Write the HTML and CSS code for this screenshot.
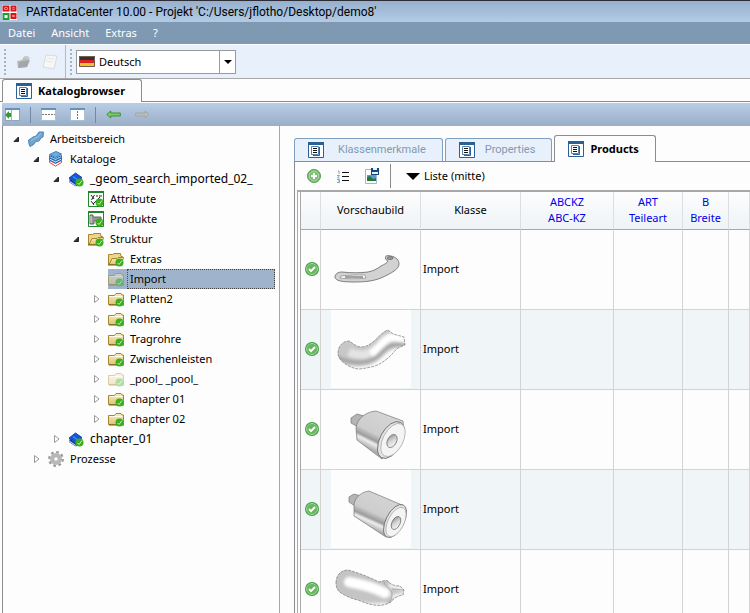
FILE: index.html
```
<!DOCTYPE html>
<html lang="de">
<head>
  <meta charset="UTF-8">
  <meta name="viewport" content="width=device-width, initial-scale=1">
  <title>PARTdataCenter 10.00</title>
  <link rel="stylesheet" href="styles.css">
</head>
<body>

  <!-- shared icons -->
  <svg class="sprite" aria-hidden="true">
    <defs>
      <linearGradient id="gFolder" x1="0" y1="0" x2="0" y2="1"><stop offset="0" stop-color="#f7ecc0"/><stop offset="1" stop-color="#dcc67c"/></linearGradient>
      <linearGradient id="gSteel" x1="0" y1="0" x2="1" y2="1"><stop offset="0" stop-color="#888"/><stop offset=".5" stop-color="#d8d8d8"/><stop offset="1" stop-color="#fff"/></linearGradient>
      <linearGradient id="gBody" x1=".7" y1="0" x2=".2" y2="1"><stop offset="0" stop-color="#d6d6d6"/><stop offset=".5" stop-color="#cdcdcd"/><stop offset=".62" stop-color="#9c9c9c"/><stop offset=".68" stop-color="#eee"/><stop offset=".8" stop-color="#aaa"/><stop offset="1" stop-color="#ddd"/></linearGradient>
      <filter id="soft" x="-10%" y="-10%" width="120%" height="120%"><feGaussianBlur stdDeviation="1.500"/></filter>
      <clipPath id="cTube"><path d="M7 43c0-7 5-12 11-12 4 2 7 6 12 6 5 0 8-2 12-5 5-4 9-10 15-12l5 4 11 3 1 8-7 3c-4 3-6 7-10 10-6 5-11 8-17 9-5 1-9 2-13 2-6-1-10-3-14-6-4-3-6-6-6-10z"/></clipPath>
      <clipPath id="cGrip"><path d="M5 33c0-8 5-13 12-13 11 3 21 7 31 12 4-1 6-2 9-1 3 4 7 5 12 5l4 4-1 5c-6 1-9 3-12 7-5 3-11 4-17 3-6-1-11-3-16-5-6-1-12-4-17-7-3-2-5-5-5-10z"/></clipPath>
    </defs>
    <symbol id="tick" viewBox="0 0 16 16">
      <circle cx="11.500" cy="11.500" r="4" fill="#3cae1c"/>
      <path d="M9.500 12l1.500 1.500 3-4" fill="none" stroke="#c4f0b4"/>
    </symbol>
    <symbol id="folder" viewBox="0 0 16 16">
      <path d="M.5 13.500V4.500h6l1.500-2h5l1 1.500h1.500v9.500z" fill="url(#gFolder)" stroke="#a8862c"/>
      <path d="M1.500 5.500h13" stroke="#fffbe0"/>
      <path d="M1 14h15" stroke="#7c5c14"/>
      <use href="#tick"/>
    </symbol>
    <symbol id="folder-open" viewBox="0 0 16 16">
      <path d="M.5 13.500v-10h4l1.500-1h6.500l.5 3h1.500v8z" fill="#ecd68c" stroke="#a8862c"/>
      <path d="M1 13.500l3-6h5l1-1h5.500l-2 7z" fill="url(#gFolder)" stroke="#a8862c"/>
      <path d="M0 14h14" stroke="#7c5c14"/>
      <use href="#tick"/>
    </symbol>
    <symbol id="book" viewBox="0 0 16 16">
      <path d="M1 7l6.500-5 6.500 4.500-5.500 5z" fill="#1258d8" stroke="#06339a" stroke-width=".8"/>
      <path d="M1.500 7.500v4l6.500 4 6-5.500V7l-5.500 5z" fill="#0b3aa8"/>
      <path d="M2 10l6 4V15l-6-3.500z" fill="#b8d4f4"/>
      <path d="M5 5.500l4 3" stroke="#3f8cf4" stroke-width="1.500"/>
      <use href="#tick"/>
    </symbol>
    <symbol id="stack" viewBox="0 0 16 16">
      <path d="M1.500 11.500l6 3.500 6-3.500v-2l-6 3-6-3z" fill="#fff" stroke="#e04848"/>
      <path d="M1.500 9l6 3 6-3V7l-6 3-6-3z" fill="#c8e4f8" stroke="#2c6cac"/>
      <path d="M1.500 6.500l6 3 6-3v-2l-6 3-6-3z" fill="#9fd0f0" stroke="#2c6cac"/>
      <path d="M1.500 3.500L8 .5l5.500 2.500-6 3.500z" fill="#69aee2" stroke="#3c7cb8"/>
    </symbol>
    <symbol id="workspace" viewBox="0 0 16 16">
      <path d="M1 13l-.5-4L3 7.500 5 6l3-1 3-4h4.500l-.5 5-2 1-2 3-3 .5L5 14l-3 1.500z" fill="#70a3d0" stroke="#5086b8"/>
      <path d="M3 10l4-3 3-1 3-4" fill="none" stroke="#9cc4e4"/>
    </symbol>
    <symbol id="attributes" viewBox="0 0 16 16">
      <path d="M.5 1h15v14.500H.5z" fill="#fff" stroke="#1f852b"/><path d="M0 1h16" stroke="#1f852b" stroke-width="2"/>
      <path d="M3 4l3 4M6.500 4l-3 5M8 5h2M11 5h3M5 13l7-7M3 10l3 4" fill="none" stroke="#222"/>
      <use href="#tick"/>
    </symbol>
    <symbol id="product" viewBox="0 0 16 16">
      <path d="M.5 1h15v14.500H.5z" fill="#fff" stroke="#1f852b"/><path d="M0 1h16" stroke="#1f852b" stroke-width="2"/>
      <path d="M2 4h3v2h8v4H6v3H2z" fill="#969696" stroke="#666"/><path d="M3 5v7" stroke="#ddd"/>
      <use href="#tick"/>
    </symbol>
    <symbol id="gear" viewBox="0 0 16 16">
      <circle cx="8" cy="8" r="6.800" fill="none" stroke="#999" stroke-width="2.200" stroke-dasharray="2.670 2.670"/>
      <circle cx="8" cy="8" r="4.300" fill="#fff" stroke="#b8b8b8" stroke-width="3.500"/>
      <circle cx="8" cy="8" r="2.300" fill="#fff" stroke="#888" stroke-width=".7"/>
    </symbol>
    <symbol id="open" viewBox="0 0 10 10"><path d="M7.500 3v4.500H3z" fill="#333" stroke="#222"/></symbol>
    <symbol id="closed" viewBox="0 0 10 10"><path d="M3.500 1.500v7L8 5z" fill="#fff" stroke="#999"/></symbol>
    <symbol id="doc" viewBox="0 0 16 16">
      <path d="M.5.5h15v15H.5z" fill="#fff" stroke="#2c5f97"/><path d="M0 1.500h16" stroke="#2c5f97" stroke-width="3"/>
      <path d="M3.500 4.500h7v8h-7z" fill="#fff" stroke="#5a83b0"/><path d="M11.500 5v8.500H5" fill="none" stroke="#2c5f97"/>
      <path d="M5 6.500h4M5 8.500h4M5 10.500h4" stroke="#111"/>
    </symbol>
    <symbol id="ok" viewBox="0 0 14 14">
      <circle cx="7" cy="7" r="7" fill="#3c9a3c"/><circle cx="7" cy="7" r="5.500" fill="#64b85c" stroke="#a4d89c"/>
      <path d="M4 7l2 2.200 4-4.200" fill="none" stroke="#fff" stroke-width="1.900"/>
    </symbol>
  </svg>

  <header class="titlebar">
    <svg width="16" height="16" viewBox="0 0 16 16">
      <path d="M0 1h15v15H0z" fill="#fff"/>
      <g fill="#fff" stroke="#d81818" stroke-width="2"><path d="M1.500 2.500h5v4h-5zM9.500 2.500h4v4h-4zM9.500 10h4v4h-4z"/></g>
      <path d="M1.500 10h5v5h-5z" fill="#fff" stroke="#1e9e34" stroke-width="2"/>
      <path d="M3 4.500h2M10.500 4.500h2M10.500 12h2" stroke="#d81818"/>
    </svg>
    <span>PARTdataCenter 10.00 - Projekt 'C:/Users/jflotho/Desktop/demo8'</span>
  </header>

  <nav class="menubar">
    <button>Datei</button>
    <button>Ansicht</button>
    <button>Extras</button>
    <button>?</button>
  </nav>

  <div class="toolbar">
    <div class="tool-group">
      <i class="grip"></i>
      <button aria-label="Öffnen"><svg width="16" height="16" viewBox="0 0 16 16"><path d="M1 7l5-1 1-2 5-1 1 3-2 7-9 1z" fill="#bbb"/><path d="M3 8l11-2-3 7-9 1z" fill="#a3a6aa"/><path d="M7 4c2-3 5-3 7 1l-3 0" fill="#c8c8c8"/></svg></button>
      <button aria-label="Neu"><svg width="16" height="16" viewBox="0 0 16 16"><path d="M4 1l11 1-3 13-11-2z" fill="#f7f7f5" stroke="#d8dce0"/><path d="M5 4l7 1M4 7l7 1" stroke="#e4e8e8"/></svg></button>
    </div>
    <div class="tool-group">
      <i class="grip"></i>
      <div class="combo">
        <svg width="16" height="11" viewBox="0 0 16 11"><path d="M0 0h16v4H0z" fill="#333"/><path d="M0 4h16v3H0z" fill="#dc2222"/><path d="M0 7h16v4H0z" fill="#f2c22c"/><path d="M.5.5h15v10H.5z" fill="none" stroke="#735c50"/></svg>
        <select aria-label="Sprache"><option>Deutsch</option><option>English</option></select>
        <span class="combo-arrow"><svg width="8" height="4" viewBox="0 0 8 4"><path d="M0 0h8L4 4z"/></svg></span>
      </div>
    </div>
  </div>

  <div class="tabs main-tabs">
    <button class="tab active"><svg width="16" height="16"><use href="#doc"/></svg>Katalogbrowser</button>
  </div>

  <div class="strip">
    <button aria-label="Baum"><svg width="15" height="13" viewBox="0 0 15 13"><path d="M.5.5h14v12H.5z" fill="#fff" stroke="#8aa6c2"/><path d="M0 1h15" stroke="#6791bd" stroke-width="2"/><path d="M6.500 2v11" stroke="#aac"/><path d="M0 7l4-4v2h2v4H4v2z" fill="#3b9636"/></svg></button>
    <i class="sep"></i>
    <button aria-label="Horizontal teilen"><svg width="15" height="13" viewBox="0 0 15 13"><path d="M.5.5h14v12H.5z" fill="#fff" stroke="#a9c0d8"/><path d="M0 1h15" stroke="#6791bd" stroke-width="2"/><path d="M1 6.500h13" stroke="#777" stroke-dasharray="2 1"/></svg></button>
    <button aria-label="Vertikal teilen"><svg width="15" height="13" viewBox="0 0 15 13"><path d="M.5.5h14v12H.5z" fill="#fff" stroke="#a9c0d8"/><path d="M0 1h15" stroke="#6791bd" stroke-width="2"/><path d="M7.500 3v9" stroke="#777" stroke-dasharray="2 1"/></svg></button>
    <i class="sep"></i>
    <button aria-label="Zurück"><svg width="15" height="9" viewBox="0 0 15 9"><path d="M.8 4.500l4-3.500v2h9.500v3H4.800v2z" fill="#7ccc60" stroke="#37913a"/></svg></button>
    <button aria-label="Vor"><svg width="15" height="9" viewBox="0 0 15 9"><path d="M14.200 4.500l-4-3.500v2H.7v3h9.500v2z" fill="#bbb" stroke="#a0a4a8"/></svg></button>
  </div>

  <main class="content">
    <aside class="tree">
      <ul>
        <li>
          <div class="node"><button class="toggle" aria-label="Zuklappen"><svg width="10" height="10"><use href="#open"/></svg></button><svg width="16" height="16"><use href="#workspace"/></svg><span>Arbeitsbereich</span></div>
          <ul>
            <li>
              <div class="node"><button class="toggle" aria-label="Zuklappen"><svg width="10" height="10"><use href="#open"/></svg></button><svg width="16" height="16"><use href="#stack"/></svg><span>Kataloge</span></div>
              <ul>
                <li>
                  <div class="node catalog"><button class="toggle" aria-label="Zuklappen"><svg width="10" height="10"><use href="#open"/></svg></button><svg width="16" height="16"><use href="#book"/></svg><span>_geom_search_imported_02_</span></div>
                  <ul>
                    <li><div class="node"><i class="toggle"></i><svg width="16" height="16"><use href="#attributes"/></svg><span>Attribute</span></div></li>
                    <li><div class="node"><i class="toggle"></i><svg width="16" height="16"><use href="#product"/></svg><span>Produkte</span></div></li>
                    <li>
                      <div class="node"><button class="toggle" aria-label="Zuklappen"><svg width="10" height="10"><use href="#open"/></svg></button><svg width="16" height="16"><use href="#folder-open"/></svg><span>Struktur</span></div>
                      <ul>
                        <li><div class="node"><i class="toggle"></i><svg width="16" height="16"><use href="#folder-open"/></svg><span>Extras</span></div></li>
                        <li><div class="node selected"><i class="toggle"></i><svg width="16" height="16"><use href="#folder"/></svg><span>Import</span></div></li>
                        <li><div class="node"><button class="toggle" aria-label="Aufklappen"><svg width="10" height="10"><use href="#closed"/></svg></button><svg width="16" height="16"><use href="#folder"/></svg><span>Platten2</span></div></li>
                        <li><div class="node"><button class="toggle" aria-label="Aufklappen"><svg width="10" height="10"><use href="#closed"/></svg></button><svg width="16" height="16"><use href="#folder"/></svg><span>Rohre</span></div></li>
                        <li><div class="node"><button class="toggle" aria-label="Aufklappen"><svg width="10" height="10"><use href="#closed"/></svg></button><svg width="16" height="16"><use href="#folder"/></svg><span>Tragrohre</span></div></li>
                        <li><div class="node"><button class="toggle" aria-label="Aufklappen"><svg width="10" height="10"><use href="#closed"/></svg></button><svg width="16" height="16"><use href="#folder"/></svg><span>Zwischenleisten</span></div></li>
                        <li><div class="node faded"><button class="toggle" aria-label="Aufklappen"><svg width="10" height="10"><use href="#closed"/></svg></button><svg width="16" height="16"><use href="#folder"/></svg><span>_pool_ _pool_</span></div></li>
                        <li><div class="node"><button class="toggle" aria-label="Aufklappen"><svg width="10" height="10"><use href="#closed"/></svg></button><svg width="16" height="16"><use href="#folder"/></svg><span>chapter 01</span></div></li>
                        <li><div class="node"><button class="toggle" aria-label="Aufklappen"><svg width="10" height="10"><use href="#closed"/></svg></button><svg width="16" height="16"><use href="#folder"/></svg><span>chapter 02</span></div></li>
                      </ul>
                    </li>
                  </ul>
                </li>
                <li><div class="node catalog"><button class="toggle" aria-label="Aufklappen"><svg width="10" height="10"><use href="#closed"/></svg></button><svg width="16" height="16"><use href="#book"/></svg><span>chapter_01</span></div></li>
              </ul>
            </li>
            <li><div class="node"><button class="toggle" aria-label="Aufklappen"><svg width="10" height="10"><use href="#closed"/></svg></button><svg width="16" height="16"><use href="#gear"/></svg><span>Prozesse</span></div></li>
          </ul>
        </li>
      </ul>
    </aside>

    <section class="detail">
      <div class="tabs detail-tabs">
        <button class="tab"><svg width="16" height="16"><use href="#doc"/></svg>Klassenmerkmale</button>
        <button class="tab"><svg width="16" height="16"><use href="#doc"/></svg>Properties</button>
        <button class="tab active"><svg width="16" height="16"><use href="#doc"/></svg>Products</button>
      </div>

      <div class="panel">
        <div class="panel-tools">
          <button aria-label="Hinzufügen"><svg width="14" height="14" viewBox="0 0 14 14"><circle cx="7" cy="7" r="6.500" fill="#62ad58" stroke="#5d9e58"/><circle cx="7" cy="7" r="5" fill="#7dc074" stroke="#b6dcae"/><path d="M7 4v6M4 7h6" stroke="#fff" stroke-width="2"/></svg></button>
          <button aria-label="Nummerierung"><svg width="12" height="13" viewBox="0 0 12 13"><path d="M5 2.500h7M5 6.500h7M5 10.500h7" stroke="#111"/><path d="M1 1h1v3M0 5.500h2.500L.5 8h2M0 9.500h2.500v1.500H1M2.500 11v1.500H0" fill="none" stroke="#7ea6c8"/></svg></button>
          <button aria-label="Bild speichern"><svg width="14" height="16" viewBox="0 0 14 16"><path d="M.5 1.500h11v14H.5z" fill="#fff" stroke="#9db8d0"/><path d="M2 7h9v6H2z" fill="#5d9bd8"/><path d="M2 13V9l3-1 3 3 3-1v3z" fill="#247838"/><path d="M6 0h8v7H6z" fill="#16457c"/><path d="M8 0h4v2H8zM7 4h6v2H7z" fill="#e8f2fa"/></svg></button>
          <i class="sep"></i>
          <button class="view-mode"><svg width="14" height="7" viewBox="0 0 14 7"><path d="M0 0h14L7 7z"/></svg>Liste (mitte)</button>
        </div>

        <div class="grid">
          <table>
            <colgroup><col class="c-state"><col class="c-wide"><col class="c-wide"><col class="c-abc"><col class="c-art"><col class="c-b"><col></colgroup>
            <thead>
              <tr>
                <th></th><th>Vorschaubild</th><th>Klasse</th>
                <th class="attr">ABCKZ<br>ABC-KZ</th><th class="attr">ART<br>Teileart</th><th class="attr">B<br>Breite</th><th></th>
              </tr>
            </thead>
            <tbody>
              <tr>
                <td class="state"><svg width="14" height="14"><use href="#ok"/></svg></td>
                <td class="preview"><svg viewBox="0 0 80 78" aria-label="Griffhebel">
                  <path d="M4 47c0-3 3-5 7-5 9 1 18 1 26 0 5-1 9-3 13-6 4-2 6-3 7-5-3-1-3-4-2-5 2-1 4 0 5 0 5 1 8 4 8 8 0 5-7 9-18 14-8 3-15 4-27 4-11 0-19-1-19-5z" fill="#d2d2d2" stroke="#666" stroke-width=".8"/>
                  <path d="M10 46c8-1 17-1 24-1l1 3c-8 1-19 1-26 0z" fill="#fff" stroke="#777" stroke-width=".6"/><path d="M14 47h18" stroke="#444"/>
                  <ellipse cx="59" cy="28" rx="3" ry="1.500" fill="#999" stroke="#555" stroke-width=".6"/>
                </svg></td>
                <td class="klass">Import</td><td></td><td></td><td></td><td></td>
              </tr>
              <tr>
                <td class="state"><svg width="14" height="14"><use href="#ok"/></svg></td>
                <td class="preview"><svg viewBox="0 0 80 78" aria-label="Rohrbogen">
                  <g clip-path="url(#cTube)"><g fill="none" filter="url(#soft)">
                    <path d="M-9 0h100v80H-9z" fill="#c8c8c8"/>
                    <path d="M18 42c14 6 24 2 34-10 6-6 12-6 26-6" stroke="#e4e4e4" stroke-width="8"/>
                    <path d="M40 44c8-4 12-13 18-16 5-2 10 0 20 1" stroke="#fff" stroke-width="8"/>
                    <path d="M4 46c16 9 36 9 46-3 8-9 12-9 26-8" stroke="#a4a4a4" stroke-width="4"/>
                    <path d="M8 56c16 6 34 4 44-6 7-7 11-10 24-11" stroke="#fff" stroke-width="5"/>
                  </g></g>
                  <path d="M7 43c0-7 5-12 11-12 4 2 7 6 12 6 5 0 8-2 12-5 5-4 9-10 15-12l5 4 11 3 1 8-7 3c-4 3-6 7-10 10-6 5-11 8-17 9-5 1-9 2-13 2-6-1-10-3-14-6-4-3-6-6-6-10z" fill="none" stroke="#777" stroke-width=".7" stroke-dasharray="3 1"/>
                </svg></td>
                <td class="klass">Import</td><td></td><td></td><td></td><td></td>
              </tr>
              <tr>
                <td class="state"><svg width="14" height="14"><use href="#ok"/></svg></td>
                <td class="preview"><svg viewBox="0 0 80 78" aria-label="Gummipuffer">
                  <path d="M20 33l0-5 6-4 7 2 3 5-5 8-4-2z" fill="#b4b4b4" stroke="#777" stroke-width=".7"/>
                  <path d="M26 50l-1-12c1-9 9-16 20-17l27 10 1 12-22 26z" fill="url(#gBody)" stroke="#777" stroke-width=".7"/>
                  <ellipse cx="60" cy="50" rx="11" ry="20" fill="#e4e4e4" stroke="#666" stroke-width=".8" transform="rotate(28 60 50)"/>
                  <ellipse cx="62" cy="50" rx="10" ry="18" fill="#f4f4f4" stroke="#999" stroke-width=".6" transform="rotate(28 62 50)"/>
                  <ellipse cx="61" cy="51" rx="4.500" ry="7" fill="url(#gSteel)" stroke="#666" stroke-width=".7" transform="rotate(28 61 51)"/>
                </svg></td>
                <td class="klass">Import</td><td></td><td></td><td></td><td></td>
              </tr>
              <tr>
                <td class="state"><svg width="14" height="14"><use href="#ok"/></svg></td>
                <td class="preview"><svg viewBox="0 0 80 78" aria-label="Gummipuffer lang">
                  <path d="M18 32v-5l5-3 7 2 3 4-5 7-4-1z" fill="#b4b4b4" stroke="#777" stroke-width=".7"/>
                  <path d="M23 46V34c2-8 8-12 15-13l33 14 3 9-19 23z" fill="url(#gBody)" stroke="#777" stroke-width=".7"/>
                  <ellipse cx="64" cy="51" rx="9" ry="18" fill="#e4e4e4" stroke="#666" stroke-width=".8" transform="rotate(27 64 51)"/>
                  <ellipse cx="65" cy="52" rx="8" ry="16" fill="#f4f4f4" stroke="#999" stroke-width=".6" transform="rotate(27 65 52)"/>
                  <ellipse cx="65" cy="53" rx="4" ry="7" fill="url(#gSteel)" stroke="#666" stroke-width=".7" transform="rotate(27 65 53)"/>
                </svg></td>
                <td class="klass">Import</td><td></td><td></td><td></td><td></td>
              </tr>
              <tr>
                <td class="state"><svg width="14" height="14"><use href="#ok"/></svg></td>
                <td class="preview"><svg viewBox="0 0 80 78" aria-label="Griff">
                  <g clip-path="url(#cGrip)"><g fill="none" filter="url(#soft)">
                    <path d="M-9 0h100v80H-9z" fill="#c4c4c4"/>
                    <path d="M18 32c12 2 24 5 36 11" stroke="#fff" stroke-width="10" stroke-linecap="round"/>
                    <path d="M10 48c14 7 28 9 46 7" stroke="#f4f4f4" stroke-width="5"/>
                    <path d="M58 35l16 4M61 47l14-3" stroke="#f4f4f4" stroke-width="4"/>
                  </g></g>
                  <path d="M53 32c1 5 8 7 8 12s-2 7-4 9M61 39l12 1" fill="none" stroke="#999" stroke-width=".7"/>
                  <path d="M5 33c0-8 5-13 12-13 11 3 21 7 31 12 4-1 6-2 9-1 3 4 7 5 12 5l4 4-1 5c-6 1-9 3-12 7-5 3-11 4-17 3-6-1-11-3-16-5-6-1-12-4-17-7-3-2-5-5-5-10z" fill="none" stroke="#777" stroke-width=".7" stroke-dasharray="3 1"/>
                </svg></td>
                <td class="klass">Import</td><td></td><td></td><td></td><td></td>
              </tr>
            </tbody>
          </table>
        </div>
      </div>
    </section>
  </main>

</body>
</html>
```
FILE: styles.css
```
* {
  box-sizing: border-box;
}

body {
  font-family: 'Noto Sans', sans-serif;
  font-size: 11px;
  line-height: 16px;
  color: #000;
  background-color: #fdfdfd;
  margin: 0;
  height: 100vh;
  display: flex;
  flex-direction: column;
  overflow: hidden;
}

button {
  font: inherit;
  color: inherit;
  background: none;
  border: none;
  padding: 0;
  display: flex;
  align-items: center;
}

svg {
  display: block;
  flex: none;
}

.sprite {
  position: absolute;
  width: 0;
  height: 0;
}

.titlebar {
  flex: none;
  display: flex;
  align-items: center;
  gap: 8px;
  height: 22px;
  padding-left: 2px;
  border-top: 1px solid #2d2d35;
  background: linear-gradient(#96b1cf, #b3cae4);
  font-family: Roboto, sans-serif;
  font-size: 12px;
}

.menubar {
  flex: none;
  display: flex;
  gap: 16px;
  height: 22px;
  padding-left: 8px;
  background-color: #7f99b3;
  color: #fff;
}

.toolbar {
  flex: none;
  display: flex;
  height: 35px;
  background-color: #e8f1fb;
  border-top: 1px solid #fdfdfd;
  border-bottom: 1px solid #a8a8a8;
}

.tool-group {
  display: flex;
  align-items: center;
  gap: 10px;
  padding: 0 7px 0 4px;
}

.tool-group + .tool-group {
  border-left: 1px solid #b5bac0;
  gap: 4px;
}

.grip {
  width: 2px;
  height: 26px;
  background: repeating-linear-gradient(#a9b3be 0 2px, transparent 2px 4px);
}

.combo {
  display: flex;
  align-items: center;
  width: 160px;
  height: 24px;
  padding-left: 2px;
  background-color: #fff;
  border: 1px solid #9a9a9a;
}

.combo select {
  flex: 1;
  min-width: 0;
  font: inherit;
  color: inherit;
  appearance: none;
  background: none;
  border: none;
  padding: 0 4px;
}

.combo-arrow {
  display: flex;
  align-items: center;
  justify-content: center;
  width: 16px;
  height: 22px;
  border-left: 1px solid #9a9a9a;
}

.tabs {
  flex: none;
  display: flex;
  align-items: flex-end;
  border-bottom: 1px solid #8c8c90;
}

.tab {
  border: 1px solid #7f9fc0;
  border-bottom: none;
  border-radius: 3px 3px 0 0;
  background-color: #e8f1fb;
  color: #8299b2;
}

.tab.active {
  background-color: #fdfdfd;
  border-color: #8c8c90;
  color: #000;
  font-weight: bold;
  margin-bottom: -1px;
}

.main-tabs {
  height: 23px;
  padding-left: 2px;
}

.main-tabs .tab {
  height: 23px;
  gap: 6px;
  padding: 0 16px 0 13px;
}

.strip {
  flex: none;
  display: flex;
  align-items: center;
  gap: 14px;
  height: 23px;
  margin: 1px 0 0 2px;
  padding-left: 3px;
  background: linear-gradient(#b8cde6, #9aafc6);
}

.sep {
  width: 1px;
  height: 16px;
  background-color: #7089a6;
}

.strip .sep {
  margin: 0 -4px;
}

.content {
  flex: 1;
  min-height: 0;
  display: flex;
  margin-left: 2px;
  border-left: 1px solid #8c8c90;
}

.tree {
  width: 277px;
  flex: none;
  padding: 3px 4px 0 5px;
  border-right: 1px solid #a8a8a8;
  overflow: hidden;
}

.tree ul {
  list-style: none;
  margin: 0;
  padding: 0;
}

.tree ul ul {
  padding-left: 20px;
}

.node {
  display: flex;
  align-items: center;
  height: 20px;
}

.node .toggle {
  width: 20px;
  height: 20px;
  flex: none;
  padding-left: 3px;
}

.node span {
  padding: 1px 3px;
  margin-left: 3px;
  white-space: nowrap;
}

.catalog span {
  font-size: 12px;
}

.selected {
  background: linear-gradient(#9fb4cc, #9fb4cc) no-repeat 20px 0;
}

.selected span {
  flex: 1;
  border: 1px dotted #444;
  padding: 1px 2px;
}

.selected svg {
  opacity: 0.5;
}

.faded svg:not(.toggle svg) {
  opacity: 0.4;
}

.detail {
  flex: 1;
  min-width: 0;
  display: flex;
  flex-direction: column;
  padding: 9px 0 0 14px;
}

.detail-tabs {
  height: 27px;
  gap: 2px;
}

.detail-tabs .tab {
  height: 23px;
  gap: 14px;
  padding: 0 16px 0 13px;
  font-family: Roboto, sans-serif;
}

.detail-tabs .tab:nth-child(2) {
  gap: 10px;
}

.detail-tabs .tab.active {
  height: 27px;
  gap: 6px;
  padding: 0 16px 0 13px;
  font-family: inherit;
}

.panel {
  flex: 1;
  min-height: 0;
  border-left: 1px solid #8c8c90;
  overflow: hidden;
}

.panel-tools {
  display: flex;
  align-items: center;
  gap: 16px;
  height: 28px;
  padding-left: 12px;
}

.panel-tools .sep {
  width: 1px;
  height: 24px;
  margin: 0 -1px 0 -5px;
  background-color: #8c8c90;
}

.view-mode {
  gap: 4px;
}

.grid {
  margin-left: 2px;
  padding-left: 2px;
  border-left: 1px solid #a8a8a8;
  border-top: 2px solid #a8a8a8;
}

table {
  width: 100%;
  table-layout: fixed;
  border-collapse: separate;
  border-spacing: 0;
  border-left: 1px solid #a8a8a8;
}

.c-state {
  width: 20px;
}

.c-wide {
  width: 100px;
}

.c-abc {
  width: 93px;
}

.c-art {
  width: 69px;
}

.c-b {
  width: 46px;
}

th {
  height: 38px;
  padding: 0 0 2px;
  font-weight: normal;
  background: linear-gradient(#fdfdfd, #eef3f6);
  border-right: 1px solid #dcdfe2;
  border-bottom: 1px solid #a8a8a8;
}

.attr {
  color: #0000f0;
}

td {
  height: 80px;
  padding: 0 0 1px;
  border-right: 1px solid #d3d3d3;
  border-bottom: 1px solid #d3d3d3;
}

tbody tr:nth-child(even) {
  background-color: #f0f5f7;
}

.state svg {
  margin-left: 4px;
}

.preview svg {
  width: 80px;
  height: 78px;
  margin: 0 auto;
  background-color: #fdfdfd;
}

.klass {
  padding-left: 2px;
}
```
